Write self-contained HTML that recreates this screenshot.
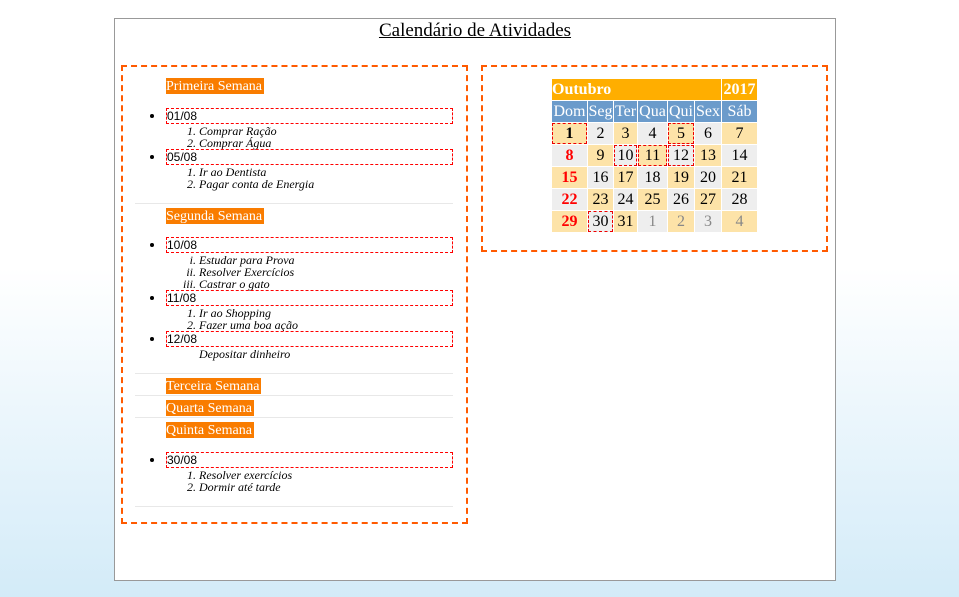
<!DOCTYPE html>
<html><head><meta charset="utf-8"><style>
body{margin:0;width:959px;height:597px;overflow:hidden;background:linear-gradient(#fff 0%,#fff 45%,#d3ebf8 100%);font-family:"Liberation Serif",serif;position:relative}
.a{position:absolute}
#main{left:114px;top:18px;width:720px;height:561px;border:1px solid #999;background:#fff}
.title{left:114px;top:20px;width:722px;text-align:center;font-size:19px;text-decoration:underline;color:#000}
.panel{border:2px dashed #ff5a00}
.h{background:#f97c00;color:#fff;font-size:14px;height:16px;line-height:17px;padding-right:2px}
.box{left:166px;width:285px;height:14px;border:1px dashed #f00;font-family:"Liberation Sans",sans-serif;font-size:12px;line-height:15px}
.dot{left:150px;width:4px;height:4px;border-radius:50%;background:#000}
.it{font-style:italic;font-size:12px;line-height:12px;left:150px;white-space:nowrap}
.it b{font-weight:normal;display:inline-block;width:46px;text-align:right;margin-right:3px}
.hr{left:135px;width:318px;height:1px;background:#e8e8e8}
table{position:absolute;left:551px;top:78px;border-spacing:1px;font-size:16px;text-align:center}
td{padding:0;height:21px;line-height:21px}
.y{background:#fde3a8}.g{background:#eee}
.d{outline:1px dashed #e00;outline-offset:-1px}
.r{color:#f00;font-weight:bold}.m{color:#888}
</style></head><body>
<div id="main" class="a"></div>
<div class="a title">Calendário de Atividades</div>
<div class="a panel" style="left:121px;top:65px;width:343px;height:455px"></div>
<div class="a panel" style="left:481px;top:65px;width:343px;height:183px"></div>

<div class="a h" style="left:166px;top:78px">Primeira Semana</div>
<div class="a dot" style="top:114px"></div><div class="a box" style="top:108px">01/08</div>
<div class="a it" style="top:125px"><b>1.</b>Comprar Ração</div>
<div class="a it" style="top:137px"><b>2.</b>Comprar Água</div>
<div class="a dot" style="top:155px"></div><div class="a box" style="top:149px">05/08</div>
<div class="a it" style="top:166px"><b>1.</b>Ir ao Dentista</div>
<div class="a it" style="top:178px"><b>2.</b>Pagar conta de Energia</div>
<div class="a hr" style="top:203px"></div>

<div class="a h" style="left:166px;top:208px">Segunda Semana</div>
<div class="a dot" style="top:243px"></div><div class="a box" style="top:237px">10/08</div>
<div class="a it" style="top:254px"><b>i.</b>Estudar para Prova</div>
<div class="a it" style="top:266px"><b>ii.</b>Resolver Exercícios</div>
<div class="a it" style="top:278px"><b>iii.</b>Castrar o gato</div>
<div class="a dot" style="top:296px"></div><div class="a box" style="top:290px">11/08</div>
<div class="a it" style="top:307px"><b>1.</b>Ir ao Shopping</div>
<div class="a it" style="top:319px"><b>2.</b>Fazer uma boa ação</div>
<div class="a dot" style="top:337px"></div><div class="a box" style="top:331px">12/08</div>
<div class="a it" style="top:348px"><b></b>Depositar dinheiro</div>
<div class="a hr" style="top:373px"></div>
<div class="a h" style="left:166px;top:378px">Terceira Semana</div>
<div class="a hr" style="top:395px"></div>
<div class="a h" style="left:166px;top:400px">Quarta Semana</div>
<div class="a hr" style="top:417px"></div>
<div class="a h" style="left:166px;top:422px">Quinta Semana</div>
<div class="a dot" style="top:458px"></div><div class="a box" style="top:452px">30/08</div>
<div class="a it" style="top:469px"><b>1.</b>Resolver exercícios</div>
<div class="a it" style="top:481px"><b>2.</b>Dormir até tarde</div>
<div class="a hr" style="top:506px"></div>

<table>
<tr style="background:#ffae00;color:#fff;font-weight:bold"><td colspan="6" style="text-align:left;height:20px;line-height:20px">Outubro</td><td>2017</td></tr>
<tr style="background:#6b9bcb;color:#fff"><td style="width:35px">Dom</td><td style="width:25px">Seg</td><td style="width:23px">Ter</td><td style="width:29px">Qua</td><td style="width:26px">Qui</td><td style="width:26px">Sex</td><td style="width:35px">Sáb</td></tr>
<tr><td class="y d"><b>1</b></td><td class="g">2</td><td class="y">3</td><td class="g">4</td><td class="y d">5</td><td class="g">6</td><td class="y">7</td></tr>
<tr><td class="g r">8</td><td class="y">9</td><td class="g d">10</td><td class="y d">11</td><td class="g d">12</td><td class="y">13</td><td class="g">14</td></tr>
<tr><td class="y r">15</td><td class="g">16</td><td class="y">17</td><td class="g">18</td><td class="y">19</td><td class="g">20</td><td class="y">21</td></tr>
<tr><td class="g r">22</td><td class="y">23</td><td class="g">24</td><td class="y">25</td><td class="g">26</td><td class="y">27</td><td class="g">28</td></tr>
<tr><td class="y r">29</td><td class="g d">30</td><td class="y">31</td><td class="g m">1</td><td class="y m">2</td><td class="g m">3</td><td class="y m">4</td></tr>
</table>
</body></html>
